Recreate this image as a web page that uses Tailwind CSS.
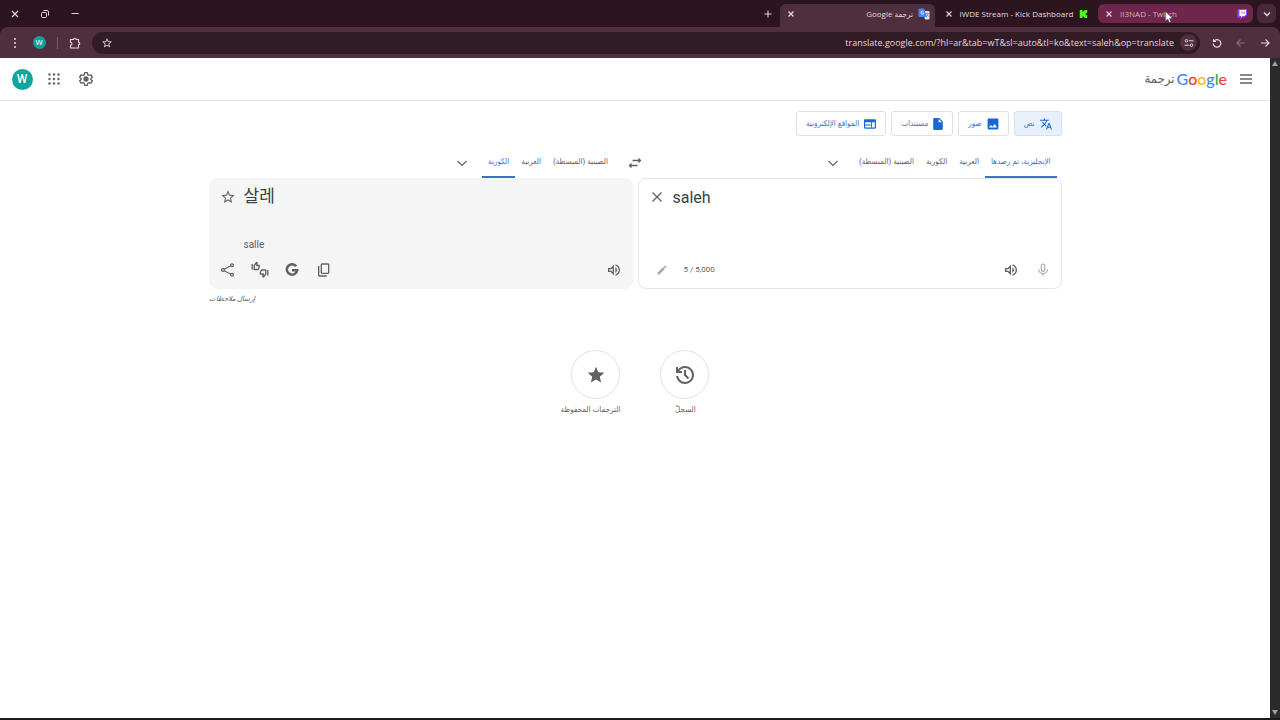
<!DOCTYPE html>
<html lang="ar" dir="rtl">
<head>
  <meta charset="UTF-8">
  <meta name="viewport" content="width=device-width, initial-scale=1.0">
  <title>ترجمة Google</title>
  <script src="https://cdn.jsdelivr.net/npm/@tailwindcss/browser@4"></script>
</head>
<body class="h-screen flex flex-col overflow-hidden bg-white text-[#5f6163] font-[Roboto,'DejaVu_Sans_Condensed','Noto_Sans_CJK_KR',sans-serif]">

  <!-- Browser window -->
  <div class="bg-[#2d1520] text-[#e8d5de] font-['Open_Sans','DejaVu_Sans_Condensed',sans-serif]">
    <div class="flex items-start h-[27px] pr-1 pt-1 gap-1">
      <button aria-label="Search tabs" class="w-[19px] h-[19px] rounded-md bg-[#4a2a3a] flex items-center justify-center">
        <svg class="size-2.5" viewBox="0 0 10 10" fill="none" stroke="currentColor" stroke-width="1.4"><path d="M2 3.5l3 3 3-3"/></svg>
      </button>
      <div class="w-[155px] h-[19px] rounded-md bg-[#6f264d] px-[5px] flex items-center gap-[5px] text-[8px]">
        <svg class="size-3" viewBox="0 0 12 12"><path d="M2.500 1H11v6L8.500 9.500H6.500L4.500 11.500v-2H1.500V3z" fill="#9146ff"/><path d="M3.500 2H10v4.500L8.500 8H6.500L5 9.300V8H3.500z" fill="#fff"/><path d="M6 3.500v2.300M8.200 3.500v2.300" stroke="#9146ff" stroke-width=".9"/></svg>
        <span dir="ltr" class="flex-1 whitespace-nowrap text-[#d3afc3]">II3NAD - Twitch</span>
        <button aria-label="Close tab" class="w-3 flex justify-center"><svg class="size-2" viewBox="0 0 8 8" stroke="currentColor" stroke-width="1.1"><path d="M1.500 1.500l5 5M6.500 1.500l-5 5"/></svg></button>
      </div>
      <div class="w-[155px] h-[19px] px-[5px] flex items-center gap-[5px] text-[8px]">
        <svg class="size-3" viewBox="0 0 12 12"><path d="M2 1.500h3.200v2h1v-1h1v-1h3.300v3h-1v1h-1v1h1v1h1v3H7.200v-1h-1v-1h-1v2H2z" fill="#53fc18"/></svg>
        <span dir="ltr" class="flex-1 whitespace-nowrap">IWDE Stream - Kick Dashboard</span>
        <button aria-label="Close tab" class="w-3 flex justify-center"><svg class="size-2" viewBox="0 0 8 8" stroke="currentColor" stroke-width="1.1"><path d="M1.500 1.500l5 5M6.500 1.500l-5 5"/></svg></button>
      </div>
      <div class="w-[155px] h-[23px] pb-1 rounded-t-md bg-[#4f2f3e] px-[5px] flex items-center gap-[5px] text-[8px]">
        <svg class="size-3" viewBox="0 0 12 12"><path d="M5 3h5.500a1 1 0 011 1v6.500a1 1 0 01-1 1H7z" fill="#dfe3ea"/><path d="M1.500.5h4.700L9 9H1.500a1 1 0 01-1-1V1.500a1 1 0 011-1z" fill="#4285f4"/><path d="M5.500 3.700a1.500 1.500 0 10.400 1.300H4.500" stroke="#fff" stroke-width=".8" fill="none"/><path d="M7.800 5.500h3M9.300 4.800v.7M10.300 5.500c-.2 1.200-1 2-1.700 2.500M8.500 6.500l2 2" stroke="#5f7796" stroke-width=".6" fill="none"/></svg>
        <span class="flex-1 whitespace-nowrap">ترجمة Google</span>
        <button aria-label="Close tab" class="w-3 flex justify-center"><svg class="size-2" viewBox="0 0 8 8" stroke="currentColor" stroke-width="1.3"><path d="M1.500 1.500l5 5M6.500 1.500l-5 5"/></svg></button>
      </div>
      <button aria-label="New tab" class="w-4 h-[19px] flex items-center justify-center"><svg class="size-2.5" viewBox="0 0 10 10" stroke="currentColor"><path d="M5 1.500v7M1.500 5h7"/></svg></button>
      <div class="flex-1"></div>
      <div class="flex h-[19px]">
        <button aria-label="Minimize" class="w-[30px] flex items-center justify-center"><svg class="size-2.5" viewBox="0 0 10 10" stroke="currentColor"><path d="M1.500 4.500h7"/></svg></button>
        <button aria-label="Restore" class="w-[30px] flex items-center justify-center"><svg class="size-2.5" viewBox="0 0 10 10" stroke="currentColor" fill="none"><rect x="1.500" y="3.500" width="5" height="5" rx="1"/><path d="M3.500 1.500H7A1.500 1.500 0 018.500 3v3.500"/></svg></button>
        <button aria-label="Close" class="w-[30px] flex items-center justify-center"><svg class="size-2.5" viewBox="0 0 10 10" stroke="currentColor" stroke-width="1.2"><path d="M2 2l6 6M8 2L2 8"/></svg></button>
      </div>
    </div>

    <div class="flex items-center h-[31px] px-[3px] rounded-t-lg bg-[#4f2f3e]">
      <button aria-label="Forward" class="size-6 flex items-center justify-center"><svg class="size-2.5" viewBox="0 0 10 10" fill="none" stroke="currentColor" stroke-width="1.2"><path d="M1 5h8M5.500 1.500L9 5 5.500 8.500"/></svg></button>
      <button aria-label="Back" class="size-6 flex items-center justify-center text-[#8a6d7b]"><svg class="size-2.5" viewBox="0 0 10 10" fill="none" stroke="currentColor" stroke-width="1.2"><path d="M9 5H1M4.500 1.500L1 5l3.500 3.500"/></svg></button>
      <button aria-label="Reload" class="size-6 flex items-center justify-center"><svg class="size-2.5" viewBox="0 0 10 10" fill="none" stroke="currentColor" stroke-width="1.2"><path d="M1.500 1v2.500H4M1.700 3.500A3.800 3.800 0 111.200 5.500"/></svg></button>
      <div class="flex-1 h-[22px] mx-[5px] px-[3px] rounded-full bg-[#311b25] flex items-center gap-0.5">
        <button aria-label="Site information" class="size-[17px] rounded-full bg-[#4f2f3e] flex items-center justify-center"><svg class="size-2.5" viewBox="0 0 10 10" fill="none" stroke="currentColor"><circle cx="2.500" cy="2.800" r="1.300"/><path d="M5 2.800h4.500M.5 7.200H5"/><circle cx="7.500" cy="7.200" r="1.300"/></svg></button>
        <input aria-label="Address" dir="ltr" class="flex-1 min-w-0 bg-transparent text-right text-[9px] px-1 outline-none" value="translate.google.com/?hl=ar&amp;tab=wT&amp;sl=auto&amp;tl=ko&amp;text=saleh&amp;op=translate">
        <button aria-label="Bookmark" class="size-6 flex items-center justify-center"><svg class="size-3" viewBox="0 0 24 24" fill="currentColor"><path d="M22 9.240l-7.190-.62L12 2 9.190 8.630 2 9.240l5.460 4.730L5.820 21 12 17.270 18.180 21l-1.630-7.030L22 9.240zM12 15.400l-3.760 2.270 1-4.280-3.320-2.880 4.380-.38L12 6.100l1.710 4.040 4.380.38-3.320 2.880 1 4.280L12 15.400z"/></svg></button>
      </div>
      <button aria-label="Extensions" class="size-6 flex items-center justify-center"><svg class="size-3" viewBox="0 0 12 12" fill="none" stroke="currentColor" stroke-width="1.1"><path d="M1.500 2.500h3a1.300 1.300 0 012.600 0h2.400V5.200a1.300 1.300 0 010 2.600v3.200h-8V8.200a1.500 1.500 0 000-3z"/></svg></button>
      <div class="w-3 h-3 flex justify-center"><span class="w-px bg-[#735563]"></span></div>
      <button aria-label="Profile" class="size-6 flex items-center justify-center"><span class="size-[13px] rounded-full bg-[#12a09a] text-white text-[8px] leading-none flex items-center justify-center font-[Roboto]">W</span></button>
      <button aria-label="Menu" class="size-6 flex items-center justify-center"><svg class="size-3" viewBox="0 0 12 12" fill="currentColor"><circle cx="6" cy="2" r="1"/><circle cx="6" cy="6" r="1"/><circle cx="6" cy="10" r="1"/></svg></button>
    </div>
  </div>

  <div class="flex-1 min-h-0 flex border-b-2 border-[#1b1b1b]">
    <!-- Scrollbar -->
    <div class="w-2.5 bg-[#2b2b2b] flex flex-col justify-between items-center py-[3px]">
      <svg class="size-1.5" viewBox="0 0 6 6" fill="#a0a0a0"><path d="M3 0l3 5H0z"/></svg>
      <svg class="size-1.5" viewBox="0 0 6 6" fill="#a0a0a0"><path d="M3 6L0 1h6z"/></svg>
    </div>

    <div class="flex-1 min-w-0">
      <header class="h-[43px] pr-2 pl-1.5 flex items-center border-b border-[#e4e5e7]">
        <button aria-label="القائمة الرئيسية" class="size-8 flex items-center justify-center"><svg class="size-3" viewBox="0 0 12 12" stroke="currentColor" stroke-width="1.500"><path d="M0 2h12M0 6h12M0 10h12"/></svg></button>
        <a href="#" class="flex items-center gap-0.5 mr-[3px]">
          <span dir="ltr" class="font-[Lato] font-medium text-base leading-6"><span class="text-[#4285f4]">G</span><span class="text-[#ea4335]">o</span><span class="text-[#fbbc05]">o</span><span class="text-[#4285f4]">g</span><span class="text-[#34a853]">l</span><span class="text-[#ea4335]">e</span></span>
          <span class="text-[13px] leading-6">ترجمة</span>
        </a>
        <div class="flex-1"></div>
        <button aria-label="الإعدادات" class="size-8 flex items-center justify-center"><svg class="size-4" viewBox="0 0 24 24" fill="none" stroke="currentColor" stroke-width="2" stroke-linejoin="round"><path d="M10 2.500h4l.6 3 2 1.200 2.900-1 2 3.500-2.300 2v1.600l2.300 2-2 3.500-2.900-1-2 1.200-.6 3h-4l-.6-3-2-1.200-2.900 1-2-3.500 2.300-2v-1.600l-2.300-2 2-3.500 2.900 1 2-1.200z"/><circle cx="12" cy="12" r="3" fill="currentColor"/></svg></button>
        <button aria-label="تطبيقات Google" class="size-8 flex items-center justify-center"><svg class="size-3" viewBox="0 0 12 12" fill="currentColor"><circle cx="1.500" cy="1.500" r="1.200"/><circle cx="6" cy="1.500" r="1.200"/><circle cx="10.500" cy="1.500" r="1.200"/><circle cx="1.500" cy="6" r="1.200"/><circle cx="6" cy="6" r="1.200"/><circle cx="10.500" cy="6" r="1.200"/><circle cx="1.500" cy="10.500" r="1.200"/><circle cx="6" cy="10.500" r="1.200"/><circle cx="10.500" cy="10.500" r="1.200"/></svg></button>
        <button aria-label="الحساب" class="size-8 flex items-center justify-center"><span class="size-[21px] rounded-full bg-[#12a5a0] text-white text-xs font-medium flex items-center justify-center">W</span></button>
      </header>

      <main class="max-w-[853px] mx-auto">
        <nav class="flex gap-[5px] pt-2.5 text-[8px] text-[#3c73c4]">
          <button class="h-[25px] px-[9px] rounded-[3px] border border-[#d5e0f3] bg-[#e8f0fb] flex items-center gap-[5px]"><svg class="size-3" viewBox="1 2 22 20" fill="#1967d2"><path d="M12.870 15.070l-2.540-2.510.03-.03c1.740-1.940 2.980-4.170 3.710-6.530H17V4h-7V2H8v2H1v1.990h11.170C11.500 7.920 10.440 9.750 9 11.350 8.070 10.320 7.300 9.190 6.690 8h-2c.73 1.630 1.730 3.170 2.980 4.560l-5.090 5.020L4 19l5-5 3.110 3.110.76-2.040zM18.500 10h-2L12 22h2l1.120-3h4.750L21 22h2l-4.500-12zm-2.620 7l1.620-4.330L19.120 17h-3.240z"/></svg>نص</button>
          <button class="h-[25px] px-[9px] rounded-[3px] border border-[#dfe1e5] flex items-center gap-[5px]"><svg class="size-3" viewBox="2 2 20 20" fill="#1967d2"><path d="M21 19V5c0-1.100-.9-2-2-2H5c-1.100 0-2 .9-2 2v14c0 1.100.9 2 2 2h14c1.100 0 2-.9 2-2zM8.500 13.500l2.500 3.010L14.500 12l4.500 6H5l3.500-4.500z"/></svg>صور</button>
          <button class="h-[25px] px-[9px] rounded-[3px] border border-[#dfe1e5] flex items-center gap-[5px]"><svg class="w-2.5 h-3" viewBox="4 2 16 20" fill="#1967d2"><path d="M6 2c-1.100 0-1.990.9-1.990 2L4 20c0 1.100.89 2 1.990 2H18c1.100 0 2-.9 2-2V8l-6-6H6zm7 7V3.500L18.500 9H13z"/></svg>مستندات</button>
          <button class="h-[25px] px-[9px] rounded-[3px] border border-[#dfe1e5] flex items-center gap-[5px]"><svg class="size-3" viewBox="2 2 20 20" fill="#1967d2"><path fill-rule="evenodd" d="M20 4H4c-1.100 0-2 .9-2 2v12c0 1.100.9 2 2 2h16c1.100 0 2-.9 2-2V6c0-1.100-.9-2-2-2zM14 18H4v-3.500h10V18zm0-5H4V9h10v4zm6 5h-4.500V9H20v9z"/></svg>المواقع الإلكترونية</button>
        </nav>

        <div class="grid grid-cols-[1fr_auto_1fr] h-[42px] pt-3 text-[8px]">
          <div class="flex pr-[5px]">
            <button class="px-1.5 border-b-2 border-[#3c73c4] text-[#3c73c4]">الإنجليزية، تم رصدها</button>
            <button class="px-1.5 border-b-2 border-transparent">العربية</button>
            <button class="px-1.5 border-b-2 border-transparent">الكورية</button>
            <button class="px-1.5 border-b-2 border-transparent">الصينية (المبسطة)</button>
            <button aria-label="لغات أخرى" class="w-8 mr-1 flex items-center justify-center"><svg class="size-2.5" viewBox="0 0 10 10" fill="none" stroke="currentColor" stroke-width="1.2"><path d="M.5 3L5 7.500 9.500 3"/></svg></button>
          </div>
          <button aria-label="تبديل اللغتين" class="w-8 flex items-center justify-center"><svg class="size-3.5" viewBox="0 0 14 14" fill="none" stroke="currentColor" stroke-width="1.3"><path d="M4.500 4.500H12.500M10.500 2.500l2 2-2 2M9.500 9.500H1.500M3.500 7.500l-2 2 2 2"/></svg></button>
          <div class="flex pr-[5px]">
            <button class="px-1.5 border-b-2 border-transparent">الصينية (المبسطة)</button>
            <button class="px-1.5 border-b-2 border-transparent">العربية</button>
            <button class="px-1.5 border-b-2 border-[#3c73c4] text-[#3c73c4]">الكورية</button>
            <button aria-label="لغات أخرى" class="w-8 mr-1 flex items-center justify-center"><svg class="size-2.5" viewBox="0 0 10 10" fill="none" stroke="currentColor" stroke-width="1.2"><path d="M.5 3L5 7.500 9.500 3"/></svg></button>
          </div>
        </div>

        <div class="flex gap-[5px]">
          <section dir="ltr" class="flex-1 rounded-lg border border-[#e4e6e8] px-0.5 pb-0.5">
            <div class="flex items-start h-[75px] pt-0.5">
              <button aria-label="محو النص" class="size-8 flex items-center justify-center"><svg class="size-3" viewBox="0 0 12 12" stroke="currentColor" stroke-width="1.300"><path d="M1.500 1.500l9 9M10.500 1.500l-9 9"/></svg></button>
              <textarea aria-label="النص المصدر" class="flex-1 h-14 pt-[5px] text-base text-[#3c4043] resize-none outline-none">saleh</textarea>
            </div>
            <div class="flex items-center">
              <button aria-label="كتابة بخط اليد" class="w-[43px] h-8 flex items-center justify-center text-[#a8abaf]"><svg class="size-3" viewBox="0 0 24 24" fill="currentColor"><path d="M3 17.250V21h3.750L17.810 9.940l-3.750-3.750L3 17.250zM20.710 7.040c.39-.39.39-1.020 0-1.410l-2.340-2.340c-.39-.39-1.020-.39-1.410 0l-1.830 1.830 3.750 3.750 1.830-1.830z"/></svg></button>
              <span class="flex-1 text-[8px]">5 / 5,000</span>
              <button aria-label="استماع" class="size-8 flex items-center justify-center"><svg class="size-4" viewBox="0 -960 960 960" fill="currentColor"><path d="M560-131v-82q90-26 145-100t55-168q0-94-55-168T560-749v-82q124 28 202 125.500T840-481q0 127-78 224.500T560-131ZM120-360v-240h160l200-200v640L280-360H120Zm440 40v-322q47 22 73.500 66t26.500 96q0 51-26.500 94.500T560-320ZM400-606l-86 86H200v80h114l86 86v-252Z"/></svg></button>
              <button aria-label="ترجمة بالصوت" class="size-8 flex items-center justify-center text-[#a8abaf]"><svg class="size-4" viewBox="0 0 24 24" fill="none" stroke="currentColor" stroke-width="1.800"><rect x="9.500" y="3" width="5" height="11" rx="2.500"/><path d="M5.500 11a6.500 6.500 0 0013 0M12 17.500V21"/></svg></button>
            </div>
          </section>

          <section dir="ltr" class="flex-1 rounded-lg border border-[#f5f5f5] bg-[#f5f5f5] px-0.5 pb-0.5">
            <div class="flex items-start h-[75px] pt-0.5">
              <button aria-label="حفظ الترجمة" class="size-8 flex items-center justify-center"><svg class="size-4" viewBox="0 0 24 24" fill="currentColor"><path d="M22 9.240l-7.190-.62L12 2 9.190 8.630 2 9.240l5.460 4.730L5.820 21 12 17.270 18.180 21l-1.630-7.030L22 9.240zM12 15.400l-3.760 2.270 1-4.280-3.320-2.880 4.380-.38L12 6.100l1.710 4.040 4.380.38-3.320 2.880 1 4.280L12 15.400z"/></svg></button>
              <div class="flex flex-col justify-between h-[70px] pt-[3px]">
                <p lang="ko" class="text-[17px] leading-6 text-[#3c4043]">살레</p>
                <p class="text-[10px] leading-3">salle</p>
              </div>
            </div>
            <div class="flex items-center">
              <button aria-label="مشاركة" class="size-8 flex items-center justify-center"><svg class="size-3.5" viewBox="0 0 14 14" fill="none" stroke="currentColor" stroke-width="1.200"><path d="M3.200 6.300l6.600-3.500M3.200 7.700l6.600 3.500"/><circle cx="2" cy="7" r="1.400"/><circle cx="11" cy="2.300" r="1.400"/><circle cx="11" cy="11.700" r="1.400"/></svg></button>
              <button aria-label="تقييم الترجمة" class="size-8 flex items-center justify-center"><svg class="size-[18px]" viewBox="0 0 18 18" fill="none" stroke="currentColor" stroke-width="1.300" stroke-linejoin="round"><path d="M1.200 3v5.500M3.200 8.500V4.500L5.500 1.500l.7.600L5.700 4.500h2.500v1.500L7.200 8.500zM16.800 14.500V9M14.800 9v4l-2.300 3-.7-.6.5-2.400H9.300v-1.500L10.500 9z"/></svg></button>
              <button aria-label="البحث في Google" class="size-8 flex items-center justify-center"><svg class="size-3.5" viewBox="0 0 14 14" fill="none" stroke="currentColor" stroke-width="2.500"><path d="M11.200 3.300A5.200 5.200 0 1012.200 7.200H7"/></svg></button>
              <button aria-label="نسخ الترجمة" class="size-8 flex items-center justify-center"><svg class="size-4" viewBox="0 -960 960 960" fill="currentColor"><path d="M360-240q-33 0-56.500-23.500T280-320v-480q0-33 23.500-56.500T360-880h360q33 0 56.500 23.500T800-800v480q0 33-23.500 56.500T720-240H360Zm0-80h360v-480H360v480ZM200-80q-33 0-56.500-23.500T120-160v-560h80v560h440v80H200Z"/></svg></button>
              <div class="flex-1"></div>
              <button aria-label="استماع" class="size-8 flex items-center justify-center"><svg class="size-4" viewBox="0 -960 960 960" fill="currentColor"><path d="M560-131v-82q90-26 145-100t55-168q0-94-55-168T560-749v-82q124 28 202 125.500T840-481q0 127-78 224.500T560-131ZM120-360v-240h160l200-200v640L280-360H120Zm440 40v-322q47 22 73.500 66t26.500 96q0 51-26.500 94.500T560-320ZM400-606l-86 86H200v80h114l86 86v-252Z"/></svg></button>
            </div>
          </section>
        </div>
        <div class="flex justify-end pt-1">
          <a href="#" class="text-[7px] leading-3 italic">إرسال ملاحظات</a>
        </div>

        <div class="flex justify-center gap-10 pt-[45px] text-[8px] leading-3">
          <a href="#" class="flex flex-col items-start gap-[5px]">
            <span class="size-[49px] rounded-full border border-[#dfe1e5] flex items-center justify-center"><svg class="size-6" viewBox="0 -960 960 960" fill="currentColor"><path d="M480-120q-138 0-240.500-91.500T122-440h82q14 104 92.500 172T480-200q117 0 198.500-81.500T760-480q0-117-81.500-198.500T480-760q-69 0-129 32t-101 88h110v80H120v-240h80v94q51-64 124.500-99T480-840q75 0 140.500 28.500t114 77q48.500 48.500 77 114T840-480q0 75-28.500 140.500t-77 114q-48.500 48.500-114 77T480-120Zm112-192L440-464v-216h80v184l128 128-56 56Z"/></svg></span>
            <span class="min-w-12 text-center">السجلّ</span>
          </a>
          <a href="#" class="flex flex-col items-start gap-[5px]">
            <span class="size-[49px] rounded-full border border-[#dfe1e5] flex items-center justify-center"><svg class="size-5" viewBox="0 0 24 24" fill="currentColor"><path d="M12 17.270L18.180 21l-1.640-7.030L22 9.240l-7.190-.61L12 2 9.190 8.630 2 9.240l5.460 4.730L5.820 21z"/></svg></span>
            <span class="min-w-12 text-center">الترجمات المحفوظة</span>
          </a>
        </div>
      </main>
    </div>
  </div>

  <!-- Mouse pointer -->
  <svg class="absolute left-[1165px] top-[11px] w-2.5 h-3" viewBox="0 0 10 12"><path d="M.5.5v9.500l2.200-2 1.600 3.500 1.600-.7-1.600-3.400h3z" fill="#fff" stroke="#333" stroke-width=".4"/></svg>
</body>
</html>
